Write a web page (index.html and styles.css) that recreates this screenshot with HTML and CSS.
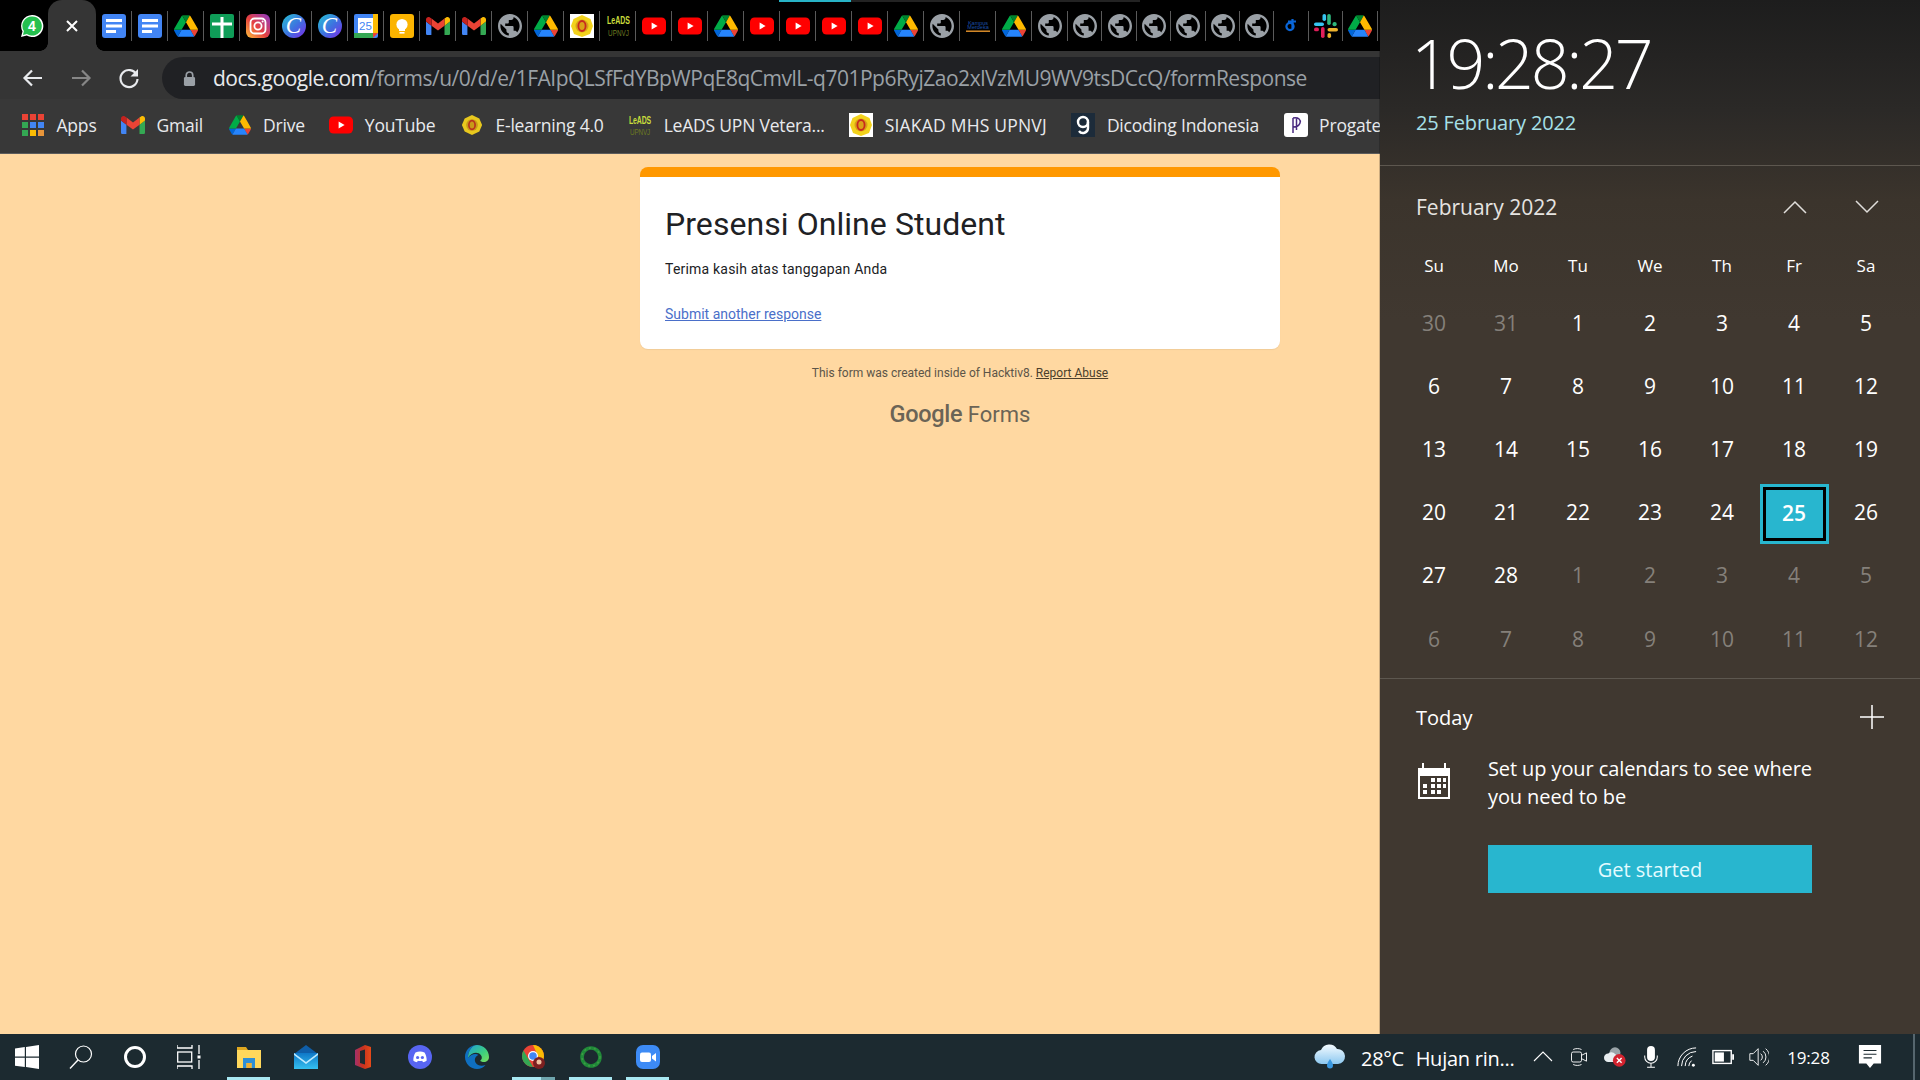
FILE: index.html
```html
<!DOCTYPE html>
<html lang="en">
<head>
  <meta charset="UTF-8" />
  <title>Presensi Online Student</title>
  <link rel="stylesheet" href="styles.css">
</head>
<body>

  <svg class="sprite" aria-hidden="true">
    <defs>
      <linearGradient id="gInsta" x1="0" y1="1" x2="1" y2="0">
        <stop offset="0" stop-color="#fdc13c"/><stop offset="0.45" stop-color="#e8413f"/><stop offset="1" stop-color="#8a3ac8"/>
      </linearGradient>
      <linearGradient id="gCanva" x1="0" y1="0" x2="1" y2="1">
        <stop offset="0" stop-color="#25c4d4"/><stop offset="0.55" stop-color="#3f6fe0"/><stop offset="1" stop-color="#7d2ae8"/>
      </linearGradient>
      <linearGradient id="gMail" x1="0" y1="0" x2="0" y2="1">
        <stop offset="0" stop-color="#0f78c8"/><stop offset="1" stop-color="#35c0f0"/>
      </linearGradient>
      <linearGradient id="gEdge" x1="0" y1="0" x2="1" y2="1">
        <stop offset="0" stop-color="#1f9fd8"/><stop offset="0.6" stop-color="#3ed07c"/><stop offset="1" stop-color="#7fe05c"/>
      </linearGradient>
      <linearGradient id="gOffice" x1="0" y1="0" x2="1" y2="0">
        <stop offset="0" stop-color="#a3306b"/><stop offset="0.5" stop-color="#c8321e"/><stop offset="1" stop-color="#e64a19"/>
      </linearGradient>
      <linearGradient id="gCloud" x1="0" y1="0" x2="0" y2="1">
        <stop offset="0" stop-color="#f4fbff"/><stop offset="1" stop-color="#8cc8f0"/>
      </linearGradient>

      <symbol id="i-whatsapp" viewBox="0 0 24 24">
        <path fill="#fff" d="M12 1a11 11 0 0 0-9.500 16.400L1 23l5.800-1.500A11 11 0 1 0 12 1z"/>
        <path fill="#25c04f" d="M12 2.400a9.600 9.600 0 0 0-8.100 14.700L3 21l3.900-1A9.600 9.600 0 1 0 12 2.400z"/>
        <text x="12" y="17" text-anchor="middle" class="svg-four">4</text>
      </symbol>
      <symbol id="i-docs" viewBox="0 0 24 24">
        <rect width="24" height="24" rx="3" fill="#4285f4"/>
        <rect x="4" y="5" width="16" height="3" fill="#fff"/>
        <rect x="4" y="10.500" width="16" height="3" fill="#fff"/>
        <rect x="4" y="16" width="10" height="3" fill="#fff"/>
      </symbol>
      <symbol id="i-drive" viewBox="0 0 87.3 78">
        <path d="m6.6 66.85 3.85 6.65c.8 1.4 1.95 2.5 3.3 3.3l13.75-23.8h-27.5c0 1.55.4 3.1 1.2 4.5z" fill="#0066da"/>
        <path d="m43.65 25-13.75-23.8c-1.35.8-2.5 1.9-3.3 3.3l-25.4 44a9.06 9.06 0 0 0 -1.2 4.5h27.5z" fill="#00ac47"/>
        <path d="m73.55 76.8c1.35-.8 2.5-1.9 3.3-3.3l1.6-2.75 7.65-13.25c.8-1.4 1.2-2.95 1.2-4.5h-27.502l5.852 11.5z" fill="#ea4335"/>
        <path d="m43.65 25 13.75-23.8c-1.35-.8-2.9-1.2-4.5-1.2h-18.5c-1.6 0-3.15.45-4.5 1.2z" fill="#00832d"/>
        <path d="m59.8 53h-32.3l-13.75 23.8c1.35.8 2.9 1.2 4.5 1.2h50.8c1.6 0 3.15-.45 4.5-1.2z" fill="#2684fc"/>
        <path d="m73.4 26.5-12.7-22c-.8-1.4-1.95-2.5-3.3-3.3l-13.75 23.8 16.15 28h27.45c0-1.55-.4-3.1-1.2-4.5z" fill="#ffba00"/>
      </symbol>
      <symbol id="i-sites" viewBox="0 0 24 24">
        <rect width="24" height="24" rx="2" fill="#0f9d58"/>
        <rect x="2" y="8.500" width="20" height="3" fill="#fff"/>
        <rect x="10.500" y="3" width="3" height="21" fill="#fff"/>
      </symbol>
      <symbol id="i-insta" viewBox="0 0 24 24">
        <rect width="24" height="24" rx="6" fill="url(#gInsta)"/>
        <rect x="4.500" y="4.500" width="15" height="15" rx="4" fill="none" stroke="#fff" stroke-width="1.800"/>
        <circle cx="12" cy="12" r="3.600" fill="none" stroke="#fff" stroke-width="1.800"/>
        <circle cx="16.600" cy="7.400" r="1" fill="#fff"/>
      </symbol>
      <symbol id="i-canva" viewBox="0 0 24 24">
        <circle cx="12" cy="12" r="12" fill="url(#gCanva)"/>
        <text x="11.500" y="19" text-anchor="middle" class="svg-canva">C</text>
      </symbol>
      <symbol id="i-calendar" viewBox="0 0 24 24">
        <rect width="24" height="24" rx="2" fill="#4285f4"/>
        <rect x="19" y="0" width="5" height="19" fill="#fbbc04"/>
        <rect x="0" y="19" width="19" height="5" fill="#34a853"/>
        <path d="M19 19h5l-5 5z" fill="#ea4335"/>
        <rect x="4" y="4" width="15" height="15" fill="#fff"/>
        <text x="11.500" y="16" text-anchor="middle" class="svg-cal">25</text>
      </symbol>
      <symbol id="i-keep" viewBox="0 0 24 24">
        <rect width="24" height="24" rx="3" fill="#fbb400"/>
        <circle cx="12" cy="10.500" r="5.600" fill="#fff"/>
        <rect x="9" y="15" width="6" height="2" fill="#fff"/>
        <rect x="9.500" y="18" width="5" height="1.600" fill="#fff"/>
      </symbol>
      <symbol id="i-gmail" viewBox="0 0 24 18">
        <path fill="#4285f4" d="M1.600 18h3.800V8.700L0 4.600v11.800C0 17.300.7 18 1.600 18z"/>
        <path fill="#34a853" d="M18.500 18h3.900c.9 0 1.600-.7 1.600-1.600V4.600l-5.500 4.100z"/>
        <path fill="#fbbc04" d="M18.500 1.600v7.100L24 4.600V2.400c0-2-2.300-3.200-3.900-2z"/>
        <path fill="#ea4335" d="M5.500 8.700V1.600L12 6.500l6.500-4.900v7.100L12 13.600z"/>
        <path fill="#c5221f" d="M0 2.400v2.200l5.500 4.100V1.600L3.900.4C2.300-.8 0 .4 0 2.400z"/>
      </symbol>
      <symbol id="i-globe" viewBox="2 2 20 20">
        <path fill="#9aa0a6" d="M12 2C6.480 2 2 6.480 2 12s4.480 10 10 10 10-4.480 10-10S17.520 2 12 2zm-1 17.930c-3.950-.49-7-3.850-7-7.930 0-.62.08-1.210.21-1.790L9 15v1c0 1.100.9 2 2 2v1.930zm6.900-2.540c-.26-.81-1-1.390-1.900-1.390h-1v-3c0-.55-.45-1-1-1H8v-2h2c.55 0 1-.45 1-1V7h2c1.100 0 2-.9 2-2v-.41c2.930 1.190 5 4.060 5 7.410 0 2.080-.8 3.970-2.100 5.390z"/>
      </symbol>
      <symbol id="i-upn" viewBox="0 0 24 24">
        <rect width="24" height="24" fill="#fff"/>
        <path d="M12 1l8.500 4 2.500 7-3 8-8 3-8-3-3-8 2.500-7z" fill="#f2d21c"/>
        <circle cx="12" cy="12" r="6.500" fill="#d8a018"/>
        <ellipse cx="12" cy="12" rx="3.600" ry="5" fill="none" stroke="#c8281e" stroke-width="1.800"/>
      </symbol>
      <symbol id="i-upn-round" viewBox="0 0 24 24">
        <path d="M12 1l8 4 3 7-3 7-8 4-8-4-3-7 3-7z" fill="#e8c81e"/>
        <circle cx="12" cy="12" r="6.400" fill="#c89a18"/>
        <ellipse cx="12" cy="12" rx="3.400" ry="4.800" fill="none" stroke="#b8301e" stroke-width="1.800"/>
      </symbol>
      <symbol id="i-leads" viewBox="0 0 24 24">
        <text x="1" y="10.500" textLength="22" lengthAdjust="spacingAndGlyphs" class="svg-leads">LeADS</text>
        <text x="2" y="22" textLength="20" lengthAdjust="spacingAndGlyphs" class="svg-upnvj">UPNVJ</text>
      </symbol>
      <symbol id="i-yt" viewBox="0 0 24 17">
        <rect width="24" height="17" rx="4.500" fill="#f00"/>
        <path d="M9.600 5v7l6-3.500z" fill="#fff"/>
      </symbol>
      <symbol id="i-kampus" viewBox="0 0 24 14">
        <text x="12" y="5.500" text-anchor="middle" class="svg-kampus">Kampus</text>
        <text x="12" y="10" text-anchor="middle" class="svg-kampus">Merdeka</text>
        <rect x="0" y="11.500" width="24" height="1.400" fill="#e8952c"/>
      </symbol>
      <symbol id="i-dico" viewBox="0 0 24 24">
        <path d="M12.500 5v9.500" fill="none" stroke="#0a66d8" stroke-width="2.200"/>
        <circle cx="10" cy="12.500" r="3.600" fill="none" stroke="#0a66d8" stroke-width="2.200"/>
        <path d="M8 7.500h8" stroke="#0a66d8" stroke-width="2"/>
      </symbol>
      <symbol id="i-slack" viewBox="0 0 24 24">
        <rect x="0" y="8.500" width="10" height="3.600" rx="1.800" fill="#36c5f0"/>
        <rect x="8.500" y="0" width="3.600" height="7" rx="1.800" fill="#36c5f0"/>
        <rect x="13.200" y="0" width="3.600" height="11" rx="1.800" fill="#2eb67d"/>
        <rect x="18.500" y="8" width="4.200" height="4.200" rx="2" fill="#2eb67d"/>
        <rect x="13.500" y="14" width="10.500" height="3.600" rx="1.800" fill="#ecb22e"/>
        <rect x="13.500" y="19" width="3.600" height="5" rx="1.800" fill="#ecb22e"/>
        <rect x="7" y="13" width="3.600" height="11" rx="1.800" fill="#e01e5a"/>
        <rect x="0" y="13.500" width="5" height="3.800" rx="1.900" fill="#e01e5a"/>
      </symbol>
      <symbol id="i-apps" viewBox="0 0 22 22">
        <rect x="0" y="0" width="6" height="6" fill="#ea4335"/><rect x="8" y="0" width="6" height="6" fill="#ea4335"/><rect x="16" y="0" width="6" height="6" fill="#ea4335"/>
        <rect x="0" y="8" width="6" height="6" fill="#34a853"/><rect x="8" y="8" width="6" height="6" fill="#4285f4"/><rect x="16" y="8" width="6" height="6" fill="#4285f4"/>
        <rect x="0" y="16" width="6" height="6" fill="#34a853"/><rect x="8" y="16" width="6" height="6" fill="#fbbc04"/><rect x="16" y="16" width="6" height="6" fill="#e8953a"/>
      </symbol>
      <symbol id="i-dicoding" viewBox="0 0 24 24">
        <rect width="24" height="24" fill="#1c2b3a"/>
        <circle cx="12" cy="9" r="5" fill="none" stroke="#fff" stroke-width="2.400"/>
        <path d="M17 9v6a5 5 0 0 1-9 3" fill="none" stroke="#fff" stroke-width="2.400"/>
      </symbol>
      <symbol id="i-progate" viewBox="0 0 24 24">
        <rect width="24" height="24" rx="3" fill="#fff"/>
        <path d="M9 5v15M9 5c6-1 8 2 7 5s-4 4-7 4M12.500 5v12" fill="none" stroke="#4a2a80" stroke-width="1.500"/>
      </symbol>
    </defs>
  </svg>

  <div class="browser">
    <div class="tabstrip">
      <div class="pinned-first"><svg class="fav"><use href="#i-whatsapp"/></svg></div>
      <div class="tab-active">
        <svg class="tab-close" viewBox="0 0 12 12"><path d="M1 1l10 10M11 1L1 11"/></svg>
      </div>
      <div class="tab"><svg class="fav"><use href="#i-docs"/></svg></div>
      <div class="tab"><svg class="fav"><use href="#i-docs"/></svg></div>
      <div class="tab"><svg class="fav"><use href="#i-drive"/></svg></div>
      <div class="tab"><svg class="fav"><use href="#i-sites"/></svg></div>
      <div class="tab"><svg class="fav"><use href="#i-insta"/></svg></div>
      <div class="tab"><svg class="fav"><use href="#i-canva"/></svg></div>
      <div class="tab"><svg class="fav"><use href="#i-canva"/></svg></div>
      <div class="tab"><svg class="fav"><use href="#i-calendar"/></svg></div>
      <div class="tab"><svg class="fav"><use href="#i-keep"/></svg></div>
      <div class="tab"><svg class="fav"><use href="#i-gmail"/></svg></div>
      <div class="tab"><svg class="fav"><use href="#i-gmail"/></svg></div>
      <div class="tab"><svg class="fav"><use href="#i-globe"/></svg></div>
      <div class="tab"><svg class="fav"><use href="#i-drive"/></svg></div>
      <div class="tab"><svg class="fav"><use href="#i-upn"/></svg></div>
      <div class="tab"><svg class="fav fav-leads"><use href="#i-leads"/></svg></div>
      <div class="tab"><svg class="fav"><use href="#i-yt"/></svg></div>
      <div class="tab"><svg class="fav"><use href="#i-yt"/></svg></div>
      <div class="tab"><svg class="fav"><use href="#i-drive"/></svg></div>
      <div class="tab"><svg class="fav"><use href="#i-yt"/></svg></div>
      <div class="tab"><svg class="fav"><use href="#i-yt"/></svg></div>
      <div class="tab"><svg class="fav"><use href="#i-yt"/></svg></div>
      <div class="tab"><svg class="fav"><use href="#i-yt"/></svg></div>
      <div class="tab"><svg class="fav"><use href="#i-drive"/></svg></div>
      <div class="tab"><svg class="fav"><use href="#i-globe"/></svg></div>
      <div class="tab"><svg class="fav"><use href="#i-kampus"/></svg></div>
      <div class="tab"><svg class="fav"><use href="#i-drive"/></svg></div>
      <div class="tab"><svg class="fav"><use href="#i-globe"/></svg></div>
      <div class="tab tab-s"><svg class="fav"><use href="#i-globe"/></svg></div>
      <div class="tab tab-s"><svg class="fav"><use href="#i-globe"/></svg></div>
      <div class="tab tab-s"><svg class="fav"><use href="#i-globe"/></svg></div>
      <div class="tab tab-s"><svg class="fav"><use href="#i-globe"/></svg></div>
      <div class="tab tab-s"><svg class="fav"><use href="#i-globe"/></svg></div>
      <div class="tab tab-s"><svg class="fav"><use href="#i-globe"/></svg></div>
      <div class="tab tab-s"><svg class="fav"><use href="#i-dico"/></svg></div>
      <div class="tab tab-s"><svg class="fav"><use href="#i-slack"/></svg></div>
      <div class="tab tab-s"><svg class="fav"><use href="#i-drive"/></svg></div>
      <div class="load-bar"><span class="load-done"></span></div>
    </div>

    <div class="toolbar">
      <svg class="nav-icon" viewBox="0 0 24 24"><path d="M21 12H4M11 4.500L3.500 12l7.500 7.500"/></svg>
      <svg class="nav-icon nav-off" viewBox="0 0 24 24"><path d="M3 12h17M13 4.500l7.500 7.500-7.500 7.500"/></svg>
      <svg class="nav-icon" viewBox="0 0 24 24"><path d="M19.500 8.500A8.500 8.500 0 1 0 20.500 13"/><path class="nav-fill" d="M21 3v7.500h-7.500z"/></svg>
      <div class="omnibox">
        <svg class="lock" viewBox="0 0 14 18"><path d="M3.500 8V5.500a3.500 3.500 0 0 1 7 0V8" fill="none" stroke="#9aa0a6" stroke-width="1.800"/><rect x="1" y="7.500" width="12" height="9.500" rx="1.500" fill="#9aa0a6"/></svg>
        <span class="url"><span class="url-host">docs.google.com</span>/forms/u/0/d/e/1FAIpQLSfFdYBpWPqE8qCmvlL-q701Pp6RyjZao2xlVzMU9WV9tsDCcQ/formResponse</span>
      </div>
    </div>

    <div class="bookmarks">
      <div class="bm"><svg class="bm-icon bm-small"><use href="#i-apps"/></svg>Apps</div>
      <div class="bm"><svg class="bm-icon"><use href="#i-gmail"/></svg>Gmail</div>
      <div class="bm"><svg class="bm-icon bm-small"><use href="#i-drive"/></svg>Drive</div>
      <div class="bm"><svg class="bm-icon"><use href="#i-yt"/></svg>YouTube</div>
      <div class="bm"><svg class="bm-icon bm-small"><use href="#i-upn-round"/></svg>E-learning 4.0</div>
      <div class="bm"><svg class="bm-icon"><use href="#i-leads"/></svg>LeADS UPN Vetera...</div>
      <div class="bm bm-caps"><svg class="bm-icon"><use href="#i-upn"/></svg>SIAKAD MHS UPNVJ</div>
      <div class="bm"><svg class="bm-icon"><use href="#i-dicoding"/></svg>Dicoding Indonesia</div>
      <div class="bm"><svg class="bm-icon"><use href="#i-progate"/></svg>Progate</div>
    </div>

    <div class="page">
      <div class="card">
        <h1 class="card-title">Presensi Online Student</h1>
        <div class="card-msg">Terima kasih atas tanggapan Anda</div>
        <a class="card-link" href="#">Submit another response</a>
      </div>
      <div class="foot-note">This form was created inside of Hacktiv8. <a href="#">Report Abuse</a></div>
      <div class="foot-logo"><span class="foot-google">Google</span> Forms</div>
    </div>
  </div>

  <div class="flyout">
    <div class="clock-head">
      <div class="clock-time">19:28:27</div>
      <div class="clock-date">25 February 2022</div>
    </div>

    <div class="cal">
      <div class="cal-top">
        <span>February 2022</span>
        <div class="cal-arrows">
          <svg class="chev" viewBox="0 0 24 14"><path d="M1 13L12 2l11 11"/></svg>
          <svg class="chev" viewBox="0 0 24 14"><path d="M1 1l11 11L23 1"/></svg>
        </div>
      </div>
      <div class="cal-week">
        <span>Su</span><span>Mo</span><span>Tu</span><span>We</span><span>Th</span><span>Fr</span><span>Sa</span>
      </div>
      <div class="cal-days">
        <span class="off">30</span><span class="off">31</span><span>1</span><span>2</span><span>3</span><span>4</span><span>5</span>
        <span>6</span><span>7</span><span>8</span><span>9</span><span>10</span><span>11</span><span>12</span>
        <span>13</span><span>14</span><span>15</span><span>16</span><span>17</span><span>18</span><span>19</span>
        <span>20</span><span>21</span><span>22</span><span>23</span><span>24</span><span class="sel">25</span><span>26</span>
        <span>27</span><span>28</span><span class="off">1</span><span class="off">2</span><span class="off">3</span><span class="off">4</span><span class="off">5</span>
        <span class="off">6</span><span class="off">7</span><span class="off">8</span><span class="off">9</span><span class="off">10</span><span class="off">11</span><span class="off">12</span>
      </div>
    </div>

    <div class="agenda">
      <div class="agenda-top">
        <span>Today</span>
        <svg class="plus" viewBox="0 0 24 24"><path d="M12 0v24M0 12h24"/></svg>
      </div>
      <div class="agenda-msg">
        <svg class="agenda-cal" viewBox="0 0 32 36">
          <path fill="#fff" fill-rule="evenodd" d="M0 5h4V0h2v5h20V0h2v5h4v31H0zM2 13v21h28V13z"/>
          <g fill="#fff">
            <rect x="13" y="15" width="4" height="4"/><rect x="19" y="15" width="4" height="4"/><rect x="25" y="15" width="3" height="4"/>
            <rect x="5" y="21" width="4" height="4"/><rect x="13" y="21" width="4" height="4"/><rect x="19" y="21" width="4" height="4"/><rect x="25" y="21" width="3" height="4"/>
            <rect x="5" y="27" width="4" height="4"/><rect x="13" y="27" width="4" height="4"/><rect x="19" y="27" width="4" height="4"/>
          </g>
        </svg>
        <p>Set up your calendars to see where you need to be</p>
      </div>
      <div class="get-started">Get started</div>
    </div>
  </div>

  <div class="taskbar">
    <div class="tb-sys">
      <svg class="tb-icon" viewBox="0 0 24 24"><path fill="#fff" d="M0 3.400l9.800-1.300v9.400H0zM11 1.900L24 0v11.500H11zM0 12.700h9.800v9.400L0 20.800zM11 12.700h13V24l-13-1.900z"/></svg>
    </div>
    <div class="tb-sys">
      <svg class="tb-icon" viewBox="0 0 24 24"><circle cx="14.500" cy="9" r="8" fill="none" stroke="#fff" stroke-width="1.200"/><path d="M9 15L1 23.500" stroke="#fff" stroke-width="1.400"/></svg>
    </div>
    <div class="tb-sys">
      <svg class="tb-icon" viewBox="0 0 24 24"><circle cx="12" cy="12" r="9.500" fill="none" stroke="#fff" stroke-width="3"/></svg>
    </div>
    <div class="tb-sys">
      <svg class="tb-icon" viewBox="0 0 24 24" fill="none" stroke="#fff" stroke-width="1.300"><path d="M0 0v3h15V0M0 24v-3h15v3"/><rect x="0.700" y="7" width="14" height="10"/><path d="M22 0v9M22 15v9"/><rect x="20.500" y="10.500" width="3" height="3" fill="#fff" stroke="none"/></svg>
    </div>

    <div class="tb-apps">
      <div class="tb-app tb-running">
        <svg class="tb-icon" viewBox="0 0 24 24"><path fill="#e0a820" d="M0 2h9l2 3h-11z"/><path fill="#ffd85c" d="M0 5h24v18H0z"/><path fill="#2d8fd6" d="M6 13h12v10h-3.500v-5h-5v5H6z"/><rect x="9.500" y="18" width="5" height="5" fill="#f0b030"/></svg>
      </div>
      <div class="tb-app">
        <svg class="tb-icon" viewBox="0 0 24 24"><path fill="#0f5ea8" d="M12 0l12 9v3H0V9z"/><rect y="8" width="24" height="16" fill="url(#gMail)"/><path fill="#bdeaff" d="M0 8l12 9 12-9v2L12 19 0 10z"/></svg>
      </div>
      <div class="tb-app">
        <svg class="tb-icon" viewBox="0 0 24 24"><path fill="url(#gOffice)" d="M4 5l10-5 6 2v20l-6 2-10-4z"/><path fill="#1f2a30" d="M9 6l5-1.500v15L9 18z"/></svg>
      </div>
      <div class="tb-app">
        <svg class="tb-icon" viewBox="0 0 24 24"><circle cx="12" cy="12" r="12" fill="#5865f2"/><path fill="#fff" d="M7.500 7.500c3-1.200 6-1.200 9 0 1.500 2.200 2.200 5 2.200 8-1.200 1-2.600 1.500-3.700 1.700l-.8-1.400c-1.500.4-2.900.4-4.400 0L9 17.200c-1.100-.2-2.500-.7-3.700-1.700 0-3 .7-5.800 2.200-8z"/><circle cx="9.600" cy="12.500" r="1.600" fill="#5865f2"/><circle cx="14.400" cy="12.500" r="1.600" fill="#5865f2"/></svg>
      </div>
      <div class="tb-app">
        <svg class="tb-icon" viewBox="0 0 24 24"><path fill="#0f6fc0" d="M12 0C5 0 0 5.500 0 12s5.500 12 12 12c3.500 0 6.500-1.500 8.500-4-3.500 1.500-8 1-10-2.500-1.500-3 0-6.500 3-7.500C11 8 6 9 3 13 3 6 7 0 12 0z"/><path fill="url(#gEdge)" d="M12 0C18.500 0 24 5 24 12c0 3.500-2.500 5-5 5-2 0-3.500-.8-3.800-1.300 1.800-1.200 2.300-3.600.6-5.700C13 6.500 6.500 7 3 13 3 6 7 0 12 0z"/></svg>
      </div>
      <div class="tb-app tb-running tb-multi">
        <svg class="tb-icon" viewBox="0 0 24 24"><circle cx="11" cy="11" r="11" fill="#ea4335"/><path fill="#34a853" d="M11 22A11 11 0 0 1 1.500 5.500L7 15z"/><path fill="#fbbc04" d="M11 0a11 11 0 0 1 9.500 16.500L16 11z"/><circle cx="11" cy="11" r="5" fill="#fff"/><circle cx="11" cy="11" r="3.800" fill="#4285f4"/><circle cx="17" cy="18" r="6" fill="#7c2020"/><circle cx="17" cy="17" r="2.500" fill="#f0c0a0"/></svg>
      </div>
      <div class="tb-app tb-running">
        <svg class="tb-icon" viewBox="0 0 24 24"><circle cx="12" cy="12" r="9" fill="none" stroke="#1f8a38" stroke-width="3.600"/><circle cx="12" cy="12" r="9" fill="none" stroke="#3f9a45" stroke-width="1.600" stroke-dasharray="2 3"/></svg>
      </div>
      <div class="tb-app tb-running">
        <svg class="tb-icon" viewBox="0 0 24 24"><rect width="24" height="24" rx="7" fill="#3d8bf5"/><rect x="4" y="7.500" width="11" height="9.500" rx="2" fill="#fff"/><path fill="#fff" d="M16 11l4-3v8.500l-4-3z"/></svg>
      </div>
    </div>

    <div class="tb-tray">
      <svg class="tray-cloud" viewBox="0 0 32 26"><path fill="url(#gCloud)" d="M8 20a7 7 0 0 1-1-14 9 9 0 0 1 16-1 7.500 7.500 0 0 1 1 15z"/><path fill="#3a98e0" d="M16 15c2 3 3 4.500 3 6.500a3 3 0 0 1-6 0c0-2 1-3.500 3-6.500z"/></svg>
      <span class="tray-weather">28°C&nbsp; <span class="tray-rain">Hujan rin...</span></span>
      <div class="tray-item"><svg class="tray-svg" viewBox="0 0 20 20"><path d="M1 14l9-9 9 9"/></svg></div>
      <div class="tray-item"><svg class="tray-svg" viewBox="0 0 20 24"><path d="M3 3c3-1.500 7-1.500 10 0M3 21c3 1.500 7 1.500 10 0"/><rect x="1" y="6" width="12" height="12" rx="2"/><path d="M13 10l6-3v10l-6-3"/></svg></div>
      <div class="tray-item"><svg class="tray-badge" viewBox="0 0 26 24"><circle cx="13" cy="7" r="6.500" fill="#9aa4a8"/><path fill="#e8eef0" d="M5 18a5 5 0 0 1 0-10 6 6 0 0 1 10 4v6z"/><circle cx="18" cy="16" r="7.500" fill="#d3232f"/><path d="M15.200 13.200l5.600 5.600M20.800 13.200l-5.600 5.600" stroke="#fff" stroke-width="1.600"/></svg></div>
      <div class="tray-item"><svg class="tray-badge" viewBox="0 0 20 28"><rect x="5" y="0" width="10" height="19" rx="5" fill="#fff"/><path d="M2 12v2a8 8 0 0 0 16 0v-2M10 22v5M5 27h10" fill="none" stroke="#fff" stroke-width="1.300"/></svg></div>
      <div class="tray-item"><svg class="tray-svg" viewBox="0 0 22 22"><path d="M1 21A20 20 0 0 1 21 1M5 21A16 16 0 0 1 21 5M9 21A12 12 0 0 1 17 10M13 21a8 8 0 0 1 3-6"/><circle cx="18" cy="20" r="1.600" fill="#fff" stroke="none"/></svg></div>
      <div class="tray-item"><svg class="tray-badge" viewBox="0 0 24 16"><rect x="1" y="1" width="20" height="14" fill="none" stroke="#fff" stroke-width="1.500"/><rect x="3" y="3" width="10" height="10" fill="#fff"/><rect x="22" y="5" width="2" height="6" fill="#fff"/></svg></div>
      <div class="tray-item"><svg class="tray-svg" viewBox="0 0 24 24"><path d="M1 8h4l6-6v20l-6-6H1zM14 8a5 5 0 0 1 0 8M17 5a9 9 0 0 1 0 14M20 2a13 13 0 0 1 0 20"/></svg></div>
      <div class="tray-clock">19:28</div>
      <div class="tray-notif">
        <svg class="tb-icon" viewBox="0 0 24 26"><path fill="#fff" d="M0 0h24v20h-8l-4 5-4-5H0z"/><path d="M5 6h14M5 10h14M5 14h9" stroke="#1c2a30" stroke-width="1.200"/></svg>
      </div>
      <div class="tray-desktop"></div>
    </div>
  </div>

</body>
</html>
```

FILE: styles.css
```css
* {
  box-sizing: border-box;
}

html, body {
  margin: 0;
  padding: 0;
  height: 100%;
}

body {
  width: 1920px;
  height: 1080px;
  overflow: hidden;
  position: relative;
  display: flex;
  flex-direction: column;
  font-family: "Open Sans", "Noto Sans", sans-serif;
  background: #ffd8a1;
}

.sprite {
  position: absolute;
  width: 0;
  height: 0;
}

.svg-four { font: 700 14px "Liberation Sans", sans-serif; fill: #fff; }
.svg-canva { font: italic 400 23px "Liberation Serif", serif; fill: #fff; }
.svg-cal { font: 400 11.500px "Liberation Sans", sans-serif; fill: #4285f4; }
.svg-leads { font: 700 10.500px "Liberation Sans", sans-serif; fill: #c8dc3c; }
.svg-upnvj { font: 400 9px "Liberation Sans", sans-serif; fill: #6c7a20; }
.svg-kampus { font: 400 5.500px "Liberation Sans", sans-serif; fill: #1a4fa8; }

/* browser */
.browser {
  flex: 1;
  min-height: 0;
  display: flex;
  flex-direction: column;
}

.tabstrip {
  height: 51px;
  flex: none;
  background: #000;
  display: flex;
  position: relative;
  padding-left: 16px;
}

.pinned-first {
  width: 32px;
  display: flex;
  align-items: center;
  justify-content: center;
}

.fav {
  width: 24px;
  height: 24px;
  margin-top: 1px;
}

.fav-leads {
  width: 25px;
  height: 26px;
}

.tab-active {
  width: 48px;
  margin-top: 0;
  background: #353535;
  border-radius: 14px 14px 0 0;
  display: flex;
  align-items: center;
  justify-content: center;
  position: relative;
}

.tab-active::before,
.tab-active::after {
  content: "";
  position: absolute;
  bottom: 0;
  width: 8px;
  height: 8px;
}

.tab-active::before {
  left: -8px;
  background: radial-gradient(circle at 0 0, #000 7.500px, #353535 8px);
}

.tab-active::after {
  right: -8px;
  background: radial-gradient(circle at 100% 0, #000 7.500px, #353535 8px);
}

.tab-close {
  width: 12px;
  height: 12px;
  margin-top: 1px;
  stroke: #fff;
  stroke-width: 2;
  fill: none;
}

.tab {
  width: 36px;
  flex: none;
  display: flex;
  align-items: center;
  justify-content: center;
  position: relative;
}

.tab-s {
  width: 34.400px;
}

.tab::after {
  content: "";
  position: absolute;
  right: 0;
  top: 11px;
  height: 30px;
  width: 1px;
  background: #5a5a5a;
}

.load-bar {
  position: absolute;
  left: 779px;
  top: 0;
  width: 361px;
  height: 2px;
  background: #232323;
}

.load-done {
  display: block;
  width: 72px;
  height: 100%;
  background: #27b3c6;
}

.toolbar {
  height: 48px;
  flex: none;
  background: #353535;
  padding: 6px 0 0 21px;
  display: flex;
  align-items: center;
  gap: 24px;
}

.nav-icon {
  width: 24px;
  height: 24px;
  flex: none;
  fill: none;
  stroke: #e8eaed;
  stroke-width: 2.200;
}

.nav-off {
  stroke: #868686;
}

.nav-fill {
  fill: #e8eaed;
  stroke: none;
}

.omnibox {
  width: 1740px;
  height: 42px;
  margin-left: -3px;
  background: #202124;
  border-radius: 21px 0 0 21px;
  display: flex;
  align-items: center;
  padding-left: 21px;
}

.lock {
  width: 13px;
  height: 17px;
  margin-right: 17px;
}

.url {
  font-size: 21px;
  letter-spacing: -0.490px;
  color: #9aa0a6;
  white-space: nowrap;
}

.url-host {
  color: #e8eaed;
}

.bookmarks {
  height: 55px;
  flex: none;
  background: #383838;
  border-bottom: 1px solid #5c5c5c;
  padding: 0 0 2px 21px;
  display: flex;
  align-items: center;
  gap: 24.500px;
  font-size: 17.500px;
  letter-spacing: -0.200px;
  color: #e8eaed;
  white-space: nowrap;
}

.bm {
  display: flex;
  align-items: center;
  gap: 11.500px;
}

.bm-caps {
  letter-spacing: 0.200px;
}

.bm-icon {
  width: 24px;
  height: 24px;
  flex: none;
}

.bm-small {
  width: 22px;
  height: 22px;
  margin: 0 1px;
}

.page {
  flex: 1;
  min-height: 0;
  background: #ffd8a1;
  padding-top: 13px;
  display: flex;
  flex-direction: column;
  align-items: center;
  font-family: Roboto, sans-serif;
}

.card {
  width: 640px;
  height: 182px;
  background: #fff;
  border-radius: 8px;
  border-top: 10px solid #ff9800;
  padding: 0 25px;
  box-shadow: 0 1px 1px rgba(0, 0, 0, 0.06);
}

.card-title {
  margin: 25px 0 0;
  font-size: 32px;
  line-height: 44px;
  font-weight: 400;
  letter-spacing: 0.060px;
  color: #202124;
}

.card-msg {
  margin-top: 13px;
  font-size: 14px;
  line-height: 20px;
  letter-spacing: 0.200px;
  color: #202124;
}

.card-link {
  display: block;
  margin-top: 25px;
  font-size: 14px;
  line-height: 20px;
  color: #4a6fc9;
}

.foot-note {
  margin-top: 15px;
  font-size: 12px;
  line-height: 18px;
  color: #5c5548;
}

.foot-note a {
  color: #4b3f2c;
}

.foot-logo {
  margin-top: 18px;
  font-size: 22px;
  line-height: 28px;
  color: #6b6456;
}

.foot-google {
  font-size: 23.500px;
  font-weight: 500;
  letter-spacing: -0.300px;
}

/* clock flyout, sits over the browser window */
.flyout {
  position: absolute;
  top: 0;
  right: 0;
  bottom: 46px;
  width: 540px;
  display: flex;
  flex-direction: column;
  color: #fff;
  background: linear-gradient(to bottom, #1d1d1d 0, #2b2927 110px, #3b342c 200px, #403830 320px);
  box-shadow: -1px 0 0 rgba(0, 0, 0, 0.2);
}

.clock-head {
  height: 166px;
  flex: none;
  padding: 18px 0 0 36px;
  border-bottom: 1px solid #5d574f;
}

.clock-time {
  font-size: 68px;
  line-height: 90px;
  font-weight: 300;
  letter-spacing: -3.250px;
  margin-left: -5px;
}

.clock-date {
  margin-top: 1px;
  font-size: 20px;
  line-height: 28px;
  letter-spacing: -0.150px;
  color: #a6e0e8;
}

.cal {
  height: 513px;
  flex: none;
  padding: 24px 18px 0;
  border-bottom: 1px solid #5d574f;
}

.cal-top {
  height: 34px;
  padding-left: 18px;
  display: flex;
  align-items: center;
  justify-content: space-between;
  font-size: 21px;
  color: #e6e4e1;
}

.cal-arrows {
  display: flex;
  gap: 48px;
  padding-right: 23px;
}

.chev {
  width: 24px;
  height: 14px;
  fill: none;
  stroke: #e0dedb;
  stroke-width: 1.500;
}

.cal-week {
  margin-top: 21px;
  height: 40px;
  display: grid;
  grid-template-columns: repeat(7, 72px);
  align-items: center;
  justify-items: center;
  font-size: 17px;
}

.cal-days {
  margin-top: 6px;
  display: grid;
  grid-template-columns: repeat(7, 72px);
  grid-auto-rows: 63.200px;
  align-items: center;
  justify-items: center;
  font-size: 21px;
}

.cal-days .off {
  color: #85807a;
}

.cal-days .sel {
  width: 69px;
  height: 60px;
  margin-top: 3px;
  padding-bottom: 2px;
  display: flex;
  align-items: center;
  justify-content: center;
  font-weight: 600;
  background: #28b6cf;
  border: 3px solid #28b6cf;
  box-shadow: inset 0 0 0 3px #000;
}

.agenda {
  padding: 24px 36px 0;
}

.agenda-top {
  height: 28px;
  display: flex;
  align-items: center;
  justify-content: space-between;
  font-size: 20px;
}

.plus {
  width: 24px;
  height: 24px;
  fill: none;
  stroke: #fff;
  stroke-width: 1.500;
}

.agenda-msg {
  margin-top: 24px;
  display: flex;
  align-items: flex-start;
  gap: 38px;
}

.agenda-cal {
  width: 32px;
  height: 36px;
  flex: none;
  margin: 8px 0 0 2px;
}

.agenda-msg p {
  margin: 0;
  width: 330px;
  font-size: 20px;
  line-height: 28px;
  letter-spacing: -0.100px;
}

.get-started {
  margin: 34px 0 0 72px;
  width: 324px;
  height: 48px;
  background: #28b6cf;
  color: #e4fbff;
  font-size: 20px;
  display: flex;
  align-items: center;
  justify-content: center;
}

/* taskbar */
.taskbar {
  height: 46px;
  flex: none;
  background: #1c2a30;
  display: flex;
  align-items: center;
  position: relative;
  color: #fff;
}

.tb-sys {
  width: 54px;
  display: flex;
  justify-content: center;
}

.tb-icon {
  width: 24px;
  height: 24px;
  display: block;
}

.tb-apps {
  display: flex;
  margin-left: 4px;
  height: 100%;
}

.tb-app {
  width: 57px;
  display: flex;
  align-items: center;
  justify-content: center;
  position: relative;
}

.tb-running::after {
  content: "";
  position: absolute;
  left: 7px;
  bottom: 0;
  width: 43px;
  height: 3px;
  background: #a8e8f2;
}

.tb-multi::before {
  content: "";
  position: absolute;
  left: 36px;
  bottom: 0;
  width: 14px;
  height: 3px;
  background: #6fa6ae;
  z-index: 1;
}

.tb-tray {
  margin-left: auto;
  display: flex;
  align-items: center;
  height: 100%;
}

.tray-cloud {
  width: 32px;
  height: 26px;
  margin-right: 15px;
}

.tray-weather {
  width: 164px;
  padding-top: 3px;
  font-size: 20px;
  letter-spacing: -0.300px;
  white-space: nowrap;
}

.tray-rain {
  margin-left: 2px;
  letter-spacing: -0.250px;
}

.tray-item {
  width: 36px;
  display: flex;
  justify-content: center;
  align-items: center;
}

.tray-svg {
  width: 20px;
  height: 20px;
  fill: none;
  stroke: #fff;
  stroke-width: 1.100;
}

.tray-badge {
  width: 22px;
  height: 22px;
}

.tray-clock {
  width: 66px;
  padding-right: 3px;
  text-align: center;
  font-size: 17px;
  letter-spacing: -0.200px;
}

.tray-notif {
  width: 54px;
  display: flex;
  justify-content: center;
}

.tray-desktop {
  width: 23px;
  height: 100%;
  position: relative;
}

.tray-desktop::after {
  content: "";
  position: absolute;
  left: 16px;
  top: 0;
  width: 2px;
  height: 100%;
  background: #56666e;
}
```
